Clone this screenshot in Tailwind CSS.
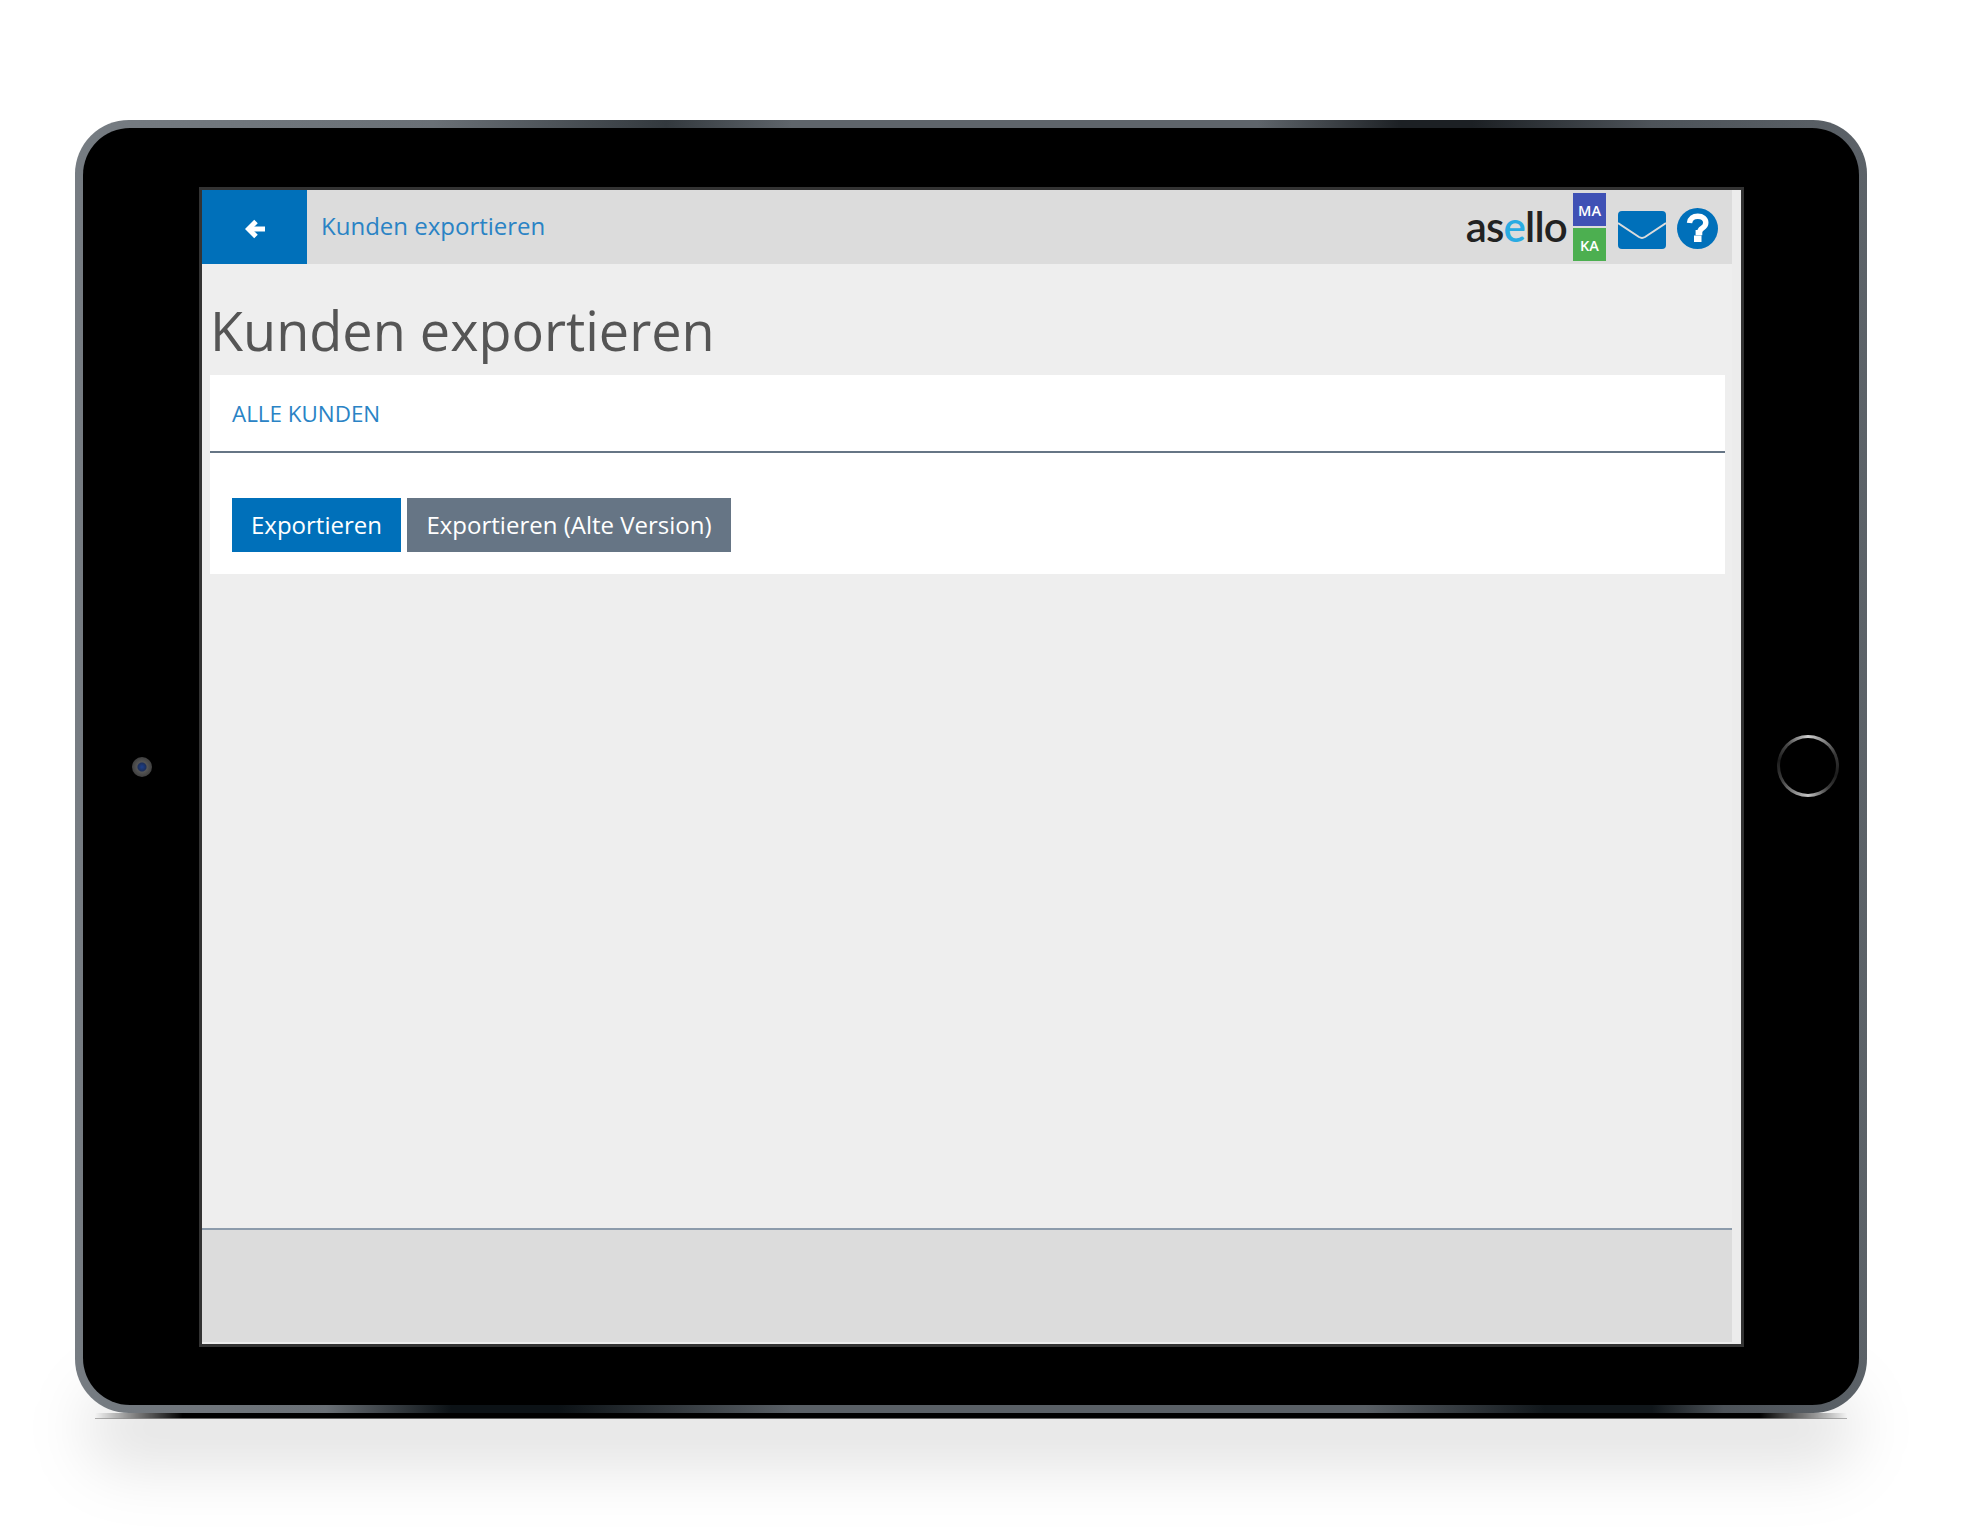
<!DOCTYPE html>
<html lang="de">
<head>
  <meta charset="UTF-8" />
  <title>Kunden exportieren</title>
  <script src="https://cdn.jsdelivr.net/npm/@tailwindcss/browser@4"></script>
</head>
<body class="bg-white w-[1975px] h-[1531px] overflow-hidden pl-[75px] pt-[120px] font-['Open_Sans',sans-serif]">

  <!-- Tablet -->
  <div class="relative w-[1792px] h-[1293px]">
    <!-- Schatten -->
    <div class="absolute left-[10px] right-[10px] top-[1265px] h-[85px] bg-black/10 rounded-[60px] blur-[30px]"></div>
    <div class="absolute left-[20px] right-[20px] top-[1293px] h-[6px] bg-[linear-gradient(90deg,transparent,#000_5%,#000_95%,transparent)] border-b border-[#8f8f8f]/70"></div>

    <!-- Gehäuse -->
    <div class="relative h-full rounded-[54px] p-[8px] bg-[image:linear-gradient(90deg,#767c82_0%,#6a7076_20%,#33393e_33%,#5f656b_40%,#5f656b_66%,#1c2024_74%,#1c2024_78%,#4d5359_88%,#5c6268_100%),linear-gradient(90deg,#767c82_0%,#6a7076_14%,#0c1216_21%,#0c1216_27%,#5a6066_40%,#5a6066_72%,#11171b_82%,#11171b_88%,#4d5359_92%,#5c6268_100%)] bg-[size:100%_51%] bg-[position:top,bottom] bg-no-repeat">
      <div class="h-full rounded-[47px] bg-black pl-[116px] pr-[115px] pt-[59px] pb-[58px]">

        <!-- Bildschirm -->
        <div class="h-full border-[3px] border-[#333] bg-[#ececec] flex flex-col">
          <div class="w-[1530px] flex-1 flex flex-col bg-[#eeeeee]">

            <!-- Kopfzeile -->
            <div class="h-[74px] bg-[#dcdcdc] flex items-center shrink-0">
              <div class="w-[105px] h-full bg-[#0070ba] flex items-center justify-center">
                <svg class="w-[21px] h-[20px] ml-[2px] mt-[3px]" viewBox="0 0 21 20" fill="none" stroke="#fff" stroke-width="5">
                  <path d="M11 2.5 3.5 10 11 17.5" />
                  <path d="M4 10H20" />
                </svg>
              </div>
              <span class="ml-[14px] text-[24px] text-[#2a83c5] -mt-[3px]">Kunden exportieren</span>
              <div class="ml-auto flex items-center h-full">
                <span class="font-['Lato',sans-serif] font-semibold text-[42px] leading-none tracking-[-0.8px] text-[#222] -mt-[3px]">as<span class="text-[#29abe2]">e</span>llo</span>
                <div class="ml-[6px] flex flex-col gap-[2px] w-[33px] text-white text-[14.5px] font-semibold text-center leading-[35px]">
                  <div class="h-[33px] bg-[#3f51b5]">MA</div>
                  <div class="h-[33px] bg-[#4caf50]">KA</div>
                </div>
                <svg class="ml-[12px] mt-[5px] w-[48px] h-[38px]" viewBox="0 0 48 38">
                  <rect width="48" height="38" rx="4" fill="#0070ba" />
                  <path d="M0 12 21 26C23 27.2 25 27.2 27 26L48 12" fill="none" stroke="#dcdcdc" stroke-width="2" />
                </svg>
                <svg class="ml-[11px] mr-[14px] mt-[3px] w-[41px] h-[41px]" viewBox="0 0 41 41">
                  <circle cx="20.5" cy="20.5" r="20.5" fill="#0070ba" />
                  <path d="M12.5 15C13 10.6 16.2 8.2 20.8 8.2C25.6 8.2 28.8 10.9 28.8 14.8C28.8 17.6 27.2 19 25.2 20.3C23.4 21.5 22.6 22.4 22.6 24.6H18.6" fill="none" stroke="#fff" stroke-width="5.4" />
                  <rect x="17" y="27.5" width="7.5" height="6.5" fill="#fff" />
                </svg>
              </div>
            </div>

            <!-- Inhalt -->
            <div class="flex-1 pl-[8px] pr-[7px]">
              <h1 class="text-[54px] leading-[72px] text-[#555] pt-[30px] h-[111px]">Kunden exportieren</h1>
              <div class="h-[199px] bg-white">
                <div class="h-[78px] border-b-2 border-[#667585] pl-[22px] pt-[1px] flex items-center">
                  <span class="text-[22.4px] text-[#2a83c5] uppercase">Alle Kunden</span>
                </div>
                <div class="flex gap-[6px] pl-[22px] pt-[45px]">
                  <button class="h-[54px] w-[169px] bg-[#0070ba] text-white text-[24px]">Exportieren</button>
                  <button class="h-[54px] w-[324px] bg-[#667585] text-white text-[24px]">Exportieren (Alte Version)</button>
                </div>
              </div>
            </div>

            <!-- Fußzeile -->
            <div class="h-[112px] bg-[#dcdcdc] border-t-2 border-[#8c9bab] shrink-0 box-content"></div>
          </div>
          <div class="h-[2px] bg-[#ececec] shrink-0"></div>
        </div>
      </div>
    </div>

    <!-- Kamera -->
    <div class="absolute left-[57px] top-[637px] w-[20px] h-[20px] rounded-full bg-[radial-gradient(circle,#1d3f8a_0%,#1c2f5c_28%,#555_36%,#2c2c2c_100%)]"></div>
    <!-- Home-Taste -->
    <div class="absolute left-[1702px] top-[615px] w-[62px] h-[62px] rounded-full p-[3px] bg-[conic-gradient(#d0d0d0,#3a3a3a_18%,#1c1c1c_30%,#3a3a3a_38%,#c4c4c4_50%,#3a3a3a_68%,#1c1c1c_78%,#4a4a4a_88%,#d0d0d0)]">
      <div class="w-full h-full rounded-full bg-black"></div>
    </div>
  </div>

</body>
</html>
